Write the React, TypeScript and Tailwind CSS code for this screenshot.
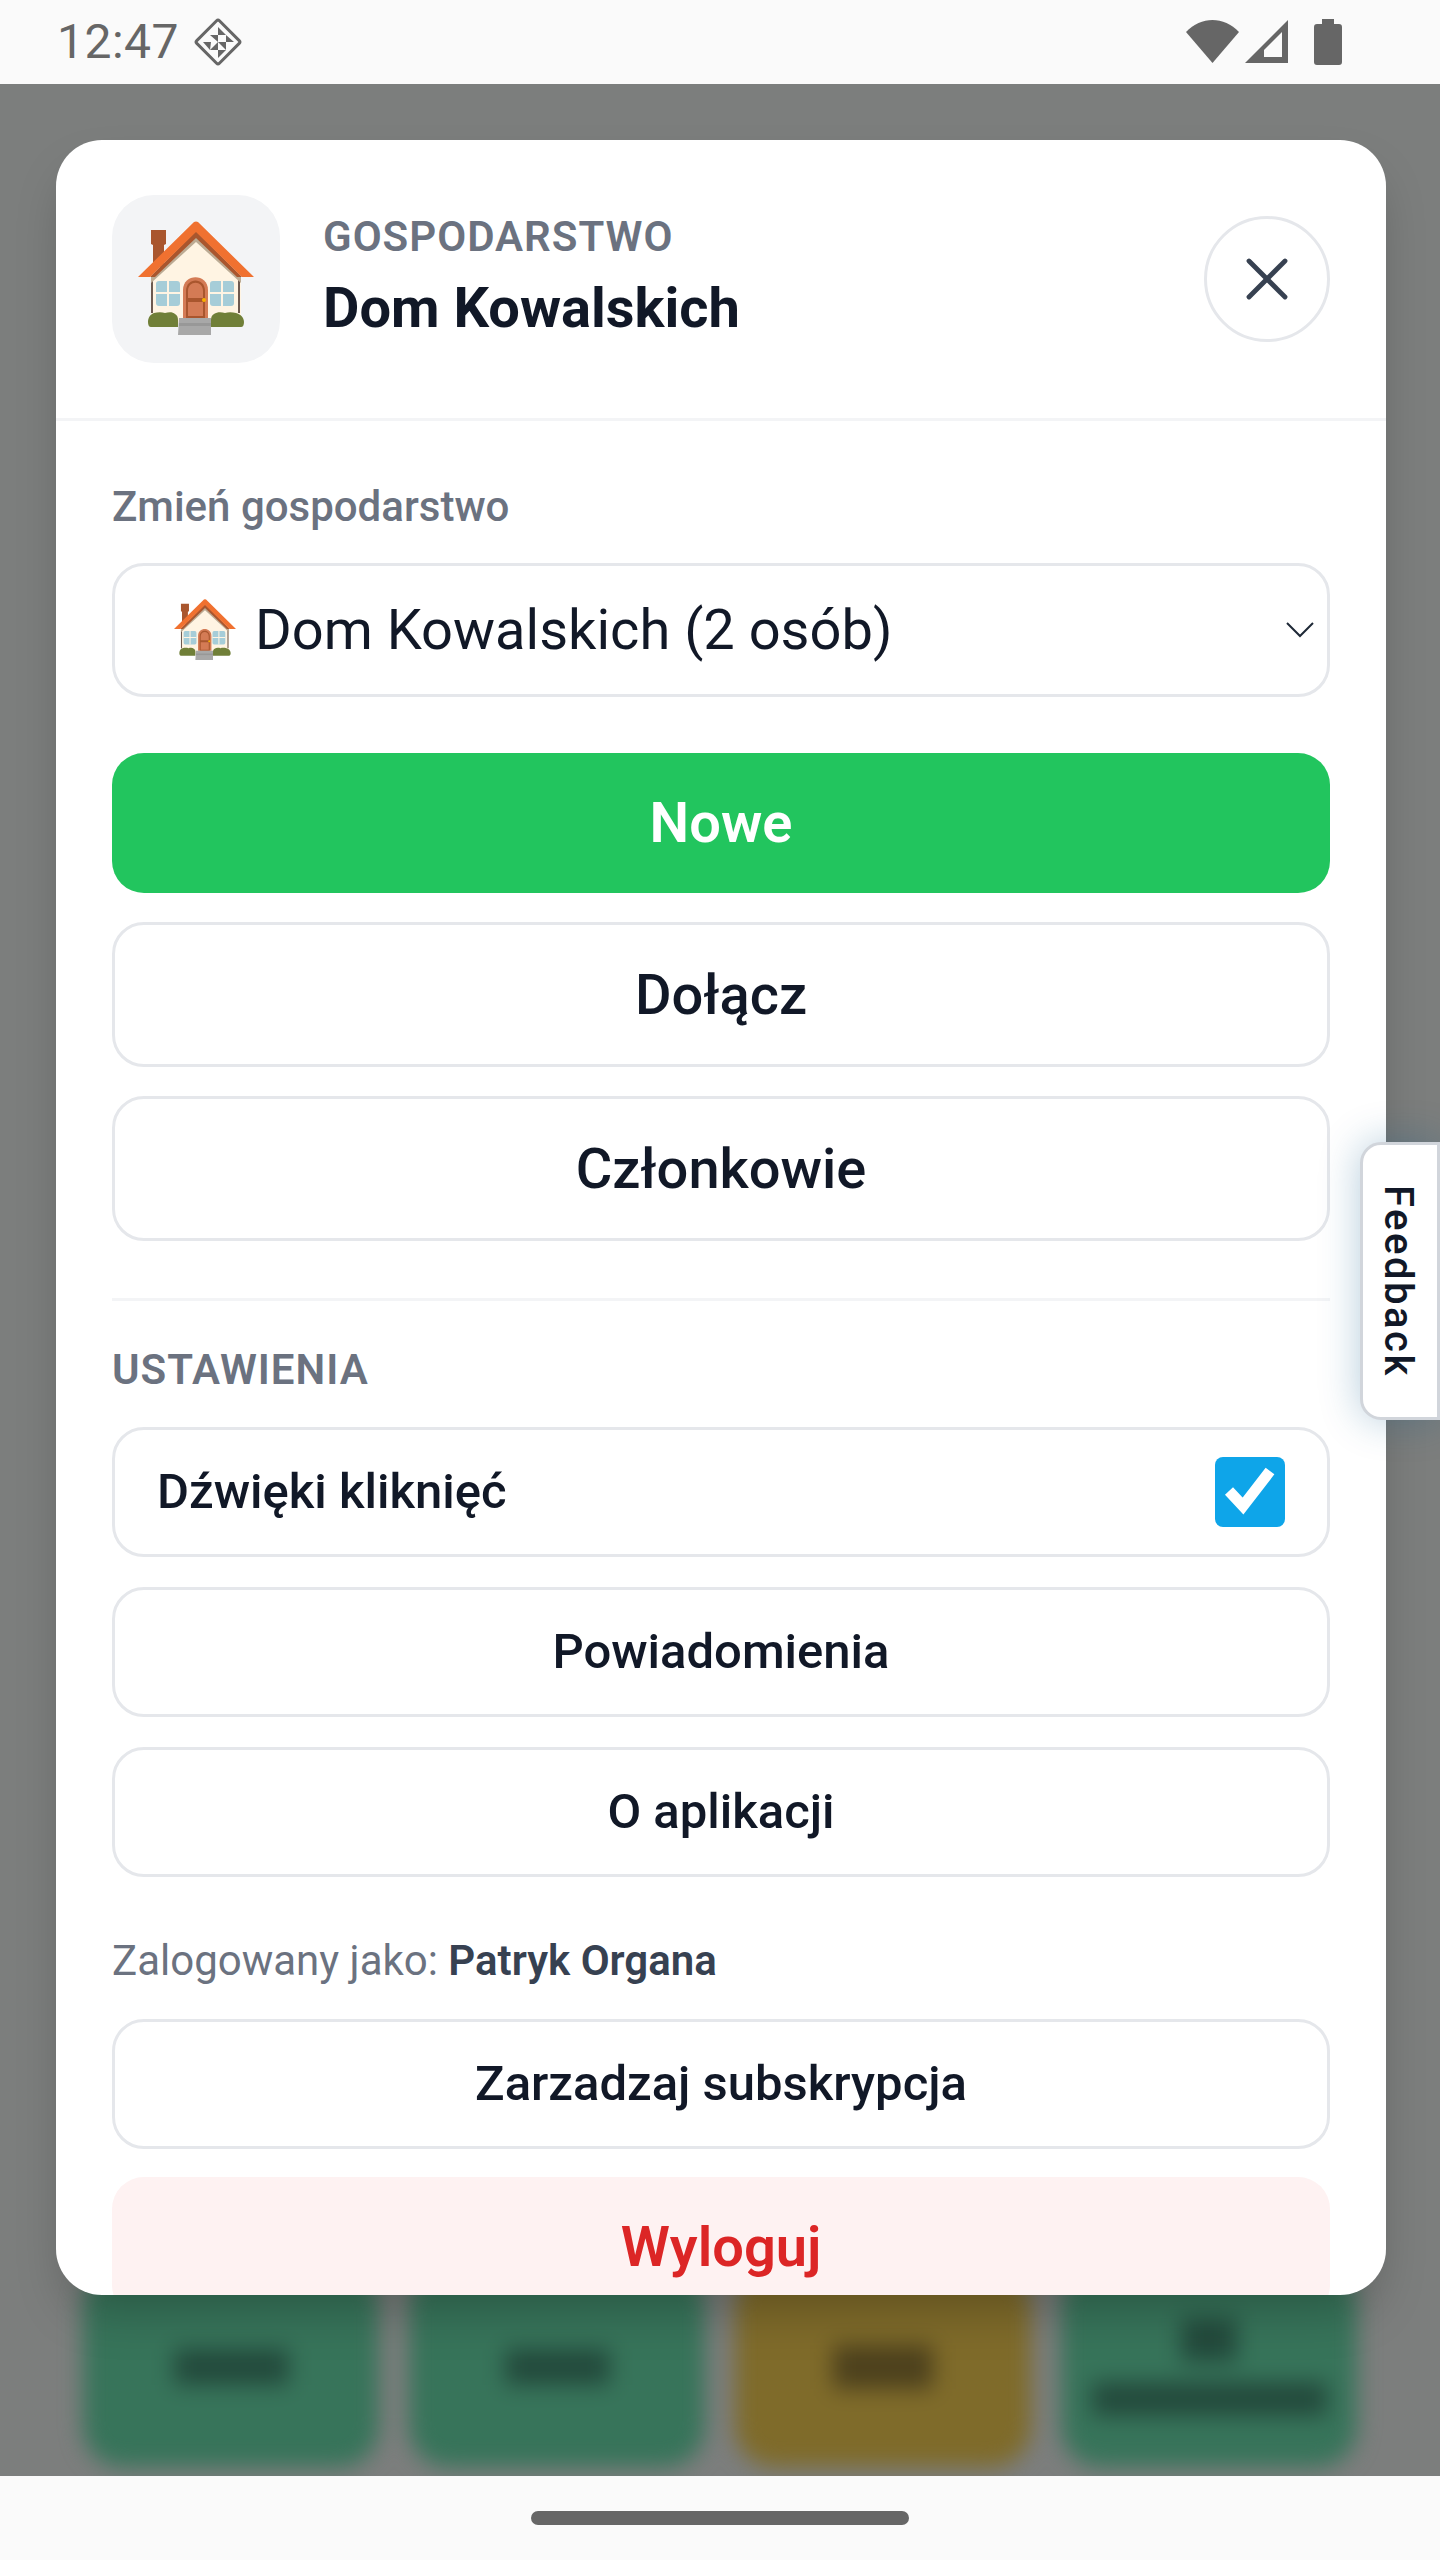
import { X } from 'lucide-react';

const tiles = [
  { color: 'bg-[#37745a]', ink: 'bg-[#234a3c]', lines: ['h-[36px] w-[115px]'] },
  { color: 'bg-[#37745a]', ink: 'bg-[#234a3c]', lines: ['h-[36px] w-[105px]'] },
  { color: 'bg-[#7f6b2a]', ink: 'bg-[#4d411d]', lines: ['h-[44px] w-[100px]'] },
  { color: 'bg-[#37745a]', ink: 'bg-[#234a3c]', lines: ['h-[44px] w-[56px]', 'h-[34px] w-[235px]'] },
];

function HouseEmoji({ className }: { className: string }) {
  return (
    <svg viewBox="0 0 116 116" className={className}>
      <path d="M13 9h15v14l-2 1v22H15V24l-2-1z" fill="#a9562e" />
      <path d="M13 56 58 14l45 42v46H13z" fill="#fff4e3" />
      <path d="M13 58h2v34h-2zM100 58h2v34h-2z" fill="#6d5a50" />
      <path d="M13 62v-7L58 12l45 43v7L58 21z" fill="#bcab94" />
      <path d="M12 56 58 10l46 46h-5L58 17 17 56z" fill="#a9562e" />
      <path d="M0 56 56 1q2-1 4 0l56 55h-12L58 11 12 56z" fill="#f07130" />
      <rect x="18" y="60" width="24" height="25" rx="3" fill="#a6cdd8" />
      <rect x="72" y="60" width="24" height="25" rx="3" fill="#a6cdd8" />
      <path d="M30 60v25M18 72h24M84 60v25M72 72h24" stroke="#fff4e3" strokeWidth="2" />
      <path d="M45 97V69c0-17 25-17 25 0v28z" fill="#d47b55" />
      <path d="M48 97V70c0-14 19-14 19 0v27z" fill="#a9562e" />
      <path d="M50 77v-7c0-11 15-11 15 0v7zM50 81h15v14H50z" fill="#d47b55" />
      <circle cx="66" cy="79" r="2" fill="#f9b000" />
      <path d="M10 101c0-5 3-8 6-9 4-1 8-1 11 0 4-1 8-1 10 1 2 1 3 3 3 6v7H13c-2 0-3-2-3-5zM73 99c0-3 1-5 3-6 3-2 7-2 11-1 3-1 7-1 11 0 4 1 8 4 8 9 0 3-1 5-3 5H73z" fill="#707f38" />
      <path d="M41 97h32v17H40z" fill="#a8a8a8" />
      <path d="M41 102h32v3H41z" fill="#989898" />
    </svg>
  );
}

function RowButton({ label, tall }: { label: string; tall?: boolean }) {
  return (
    <button
      className={`w-full rounded-[32px] border-[3px] border-[#e5e7eb] bg-white font-medium text-[#111827] ${
        tall ? 'h-[145px] text-[56px]' : 'h-[130px] text-[49px]'
      }`}
    >
      {label}
    </button>
  );
}

export default function App() {
  return (
    <div className="flex h-[2560px] w-[1440px] flex-col overflow-hidden bg-[#7c7e7d] font-['Roboto',sans-serif]">
      {/* Status bar */}
      <div className="flex h-[84px] shrink-0 items-center justify-between bg-[#fafafa] pl-[57px] pr-[98px] text-[#666666]">
        <div className="flex items-center gap-[14px]">
          <span className="text-[48px] leading-none tracking-[0.5px]">12:47</span>
          <svg viewBox="0 0 50 50" className="h-[50px] w-[50px]">
            <rect x="9" y="9" width="32" height="32" rx="2" transform="rotate(45 25 25)" fill="none" stroke="#666666" strokeWidth="3" />
            <path d="M25 10l8 8h-8zM17 18h8v7zM33 18l8 7h-8zM10 25h8l-1 8zM25 25h8v8zM25 25l-8 8h8zM25 33h8l-8 8z" fill="#666666" />
          </svg>
        </div>
        <div className="flex items-center">
          <svg viewBox="0 0 54 46" className="h-[46px] w-[54px]">
            <path d="M0 13C15 -3 38 -3 53 13L26.500 44z" fill="#666666" />
          </svg>
          <svg viewBox="0 0 46 46" className="ml-[4px] h-[46px] w-[46px]">
            <path d="M1 44 44 1v43z" fill="#666666" />
            <path d="M20 38h18V13L20 31z" fill="#fafafa" />
          </svg>
          <svg viewBox="0 0 28 46" className="ml-[24px] h-[46px] w-[28px]">
            <path d="M8 0h12v5h5a3 3 0 0 1 3 3v35a3 3 0 0 1-3 3H3a3 3 0 0 1-3-3V8a3 3 0 0 1 3-3h5z" fill="#666666" />
          </svg>
        </div>
      </div>

      {/* Page behind the sheet */}
      <div className="relative flex min-h-0 flex-1 flex-col justify-end overflow-hidden">
        <div className="mb-[9px] grid grid-cols-4 gap-[30px] px-[83px] blur-[11px]">
          {tiles.map((tile, index) => (
            <div
              key={index}
              className={`flex h-[200px] flex-col items-center justify-center gap-[20px] rounded-[40px] ${tile.color}`}
            >
              {tile.lines.map((size) => (
                <div key={size} className={`${size} ${tile.ink}`} />
              ))}
            </div>
          ))}
        </div>

        {/* Sheet */}
        <div className="absolute left-[56px] top-[56px] h-[2155px] w-[1330px] overflow-hidden rounded-[46px] bg-white shadow-2xl">
          <div className="flex h-[281px] items-center gap-[43px] border-b-[3px] border-[#f3f4f6] px-[56px]">
            <div className="flex h-[168px] w-[168px] shrink-0 items-center justify-center rounded-[42px] bg-[#f3f4f6]">
              <HouseEmoji className="h-[116px] w-[116px]" />
            </div>
            <div className="mb-[6px] flex-1">
              <div className="text-[42px] font-semibold leading-[55px] tracking-[1px] text-[#6b7280]">GOSPODARSTWO</div>
              <div className="mt-[8px] text-[56px] font-bold leading-[72px] text-[#111827]">Dom Kowalskich</div>
            </div>
            <button className="flex h-[126px] w-[126px] items-center justify-center rounded-full border-[3px] border-[#e5e7eb] text-[#374151]">
              <X size={72} strokeWidth={1.600} />
            </button>
          </div>

          <div className="flex flex-col px-[56px] pt-[58px]">
            <div className="text-[42px] font-medium leading-[55px] text-[#6b7280]">Zmień gospodarstwo</div>
            <div className="mt-[29px] flex h-[134px] items-center rounded-[32px] border-[3px] border-[#e5e7eb] pl-[59px] pr-[13px]">
              <HouseEmoji className="h-[62px] w-[62px]" />
              <span className="ml-[19px] flex-1 text-[56px] text-[#111827]">Dom Kowalskich (2 osób)</span>
              <svg viewBox="0 0 28 16" className="h-[16px] w-[28px]">
                <path d="M1 1l13 13L27 1" fill="none" stroke="#1f2937" strokeWidth="2" />
              </svg>
            </div>

            <button className="mt-[56px] h-[140px] w-full rounded-[32px] bg-[#22c55e] text-[56px] font-semibold text-white">Nowe</button>
            <div className="mt-[29px] flex flex-col gap-[29px]">
              <RowButton label="Dołącz" tall />
              <RowButton label="Członkowie" tall />
            </div>

            <div className="mt-[57px] h-[3px] bg-[#f3f4f6]" />
            <div className="mt-[41px] text-[42px] font-semibold leading-[55px] tracking-[1px] text-[#6b7280]">USTAWIENIA</div>

            <div className="mt-[30px] flex h-[130px] items-center justify-between rounded-[32px] border-[3px] border-[#e5e7eb] px-[42px]">
              <span className="text-[49px] font-medium text-[#111827]">Dźwięki kliknięć</span>
              <div className="flex h-[70px] w-[70px] items-center justify-center rounded-[8px] bg-[#0ea5e9]">
                <svg viewBox="0 0 70 70" className="h-[70px] w-[70px]">
                  <path d="M14 34l14 15L55 14" fill="none" stroke="#ffffff" strokeWidth="11" />
                </svg>
              </div>
            </div>
            <div className="mt-[30px] flex flex-col gap-[30px]">
              <RowButton label="Powiadomienia" />
              <RowButton label="O aplikacji" />
            </div>

            <div className="mt-[56px] text-[42px] leading-[55px] text-[#6b7280]">
              Zalogowany jako: <span className="font-semibold text-[#374151]">Patryk Organa</span>
            </div>
            <div className="mt-[31px]">
              <RowButton label="Zarzadzaj subskrypcja" />
            </div>
            <button className="mt-[28px] h-[140px] w-full shrink-0 rounded-[32px] bg-[#fef2f2] text-[56px] font-semibold text-[#dc2626]">Wyloguj</button>
          </div>
        </div>

        {/* Feedback tab */}
        <button className="absolute right-0 top-[1058px] flex h-[278px] w-[80px] items-center justify-center rounded-l-[21px] border-[3px] border-[#d1d5db] bg-white pr-[4px] shadow-[0_0_40px_rgba(14,90,140,0.3)]">
          <span className="text-[40px] font-medium tracking-[2.500px] text-[#111827] [writing-mode:vertical-rl]">Feedback</span>
        </button>
      </div>

      {/* Navigation bar */}
      <div className="flex h-[84px] shrink-0 items-center justify-center bg-[#fafafa]">
        <div className="h-[14px] w-[378px] rounded-full bg-[#666666]" />
      </div>
    </div>
  );
}
